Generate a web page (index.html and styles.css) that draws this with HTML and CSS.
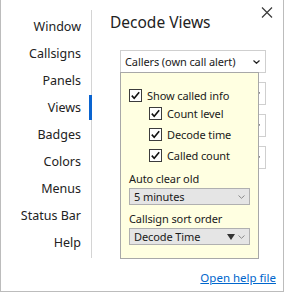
FILE: index.html
```html
<html lang="en">
<head>
    <meta charset="UTF-8">
    <title>Settings</title>
    <link rel="stylesheet" href="styles.css">
</head>
<body>
    <div class="window">
        <div class="nav">
            <div class="nav-item">Window</div>
            <div class="nav-item">Callsigns</div>
            <div class="nav-item">Panels</div>
            <div class="nav-item active">Views</div>
            <div class="nav-item">Badges</div>
            <div class="nav-item">Colors</div>
            <div class="nav-item">Menus</div>
            <div class="nav-item">Status Bar</div>
            <div class="nav-item">Help</div>
        </div>
        <div class="main">
            <div class="header">
                <div class="title">Decode Views</div>
                <div class="close">
                    <svg width="12" height="11" viewBox="0 0 12 11">
                        <path d="M1 0.5 L11 10.5 M11 0.5 L1 10.5" stroke="#3a3a3a" stroke-width="1.2" fill="none"/>
                    </svg>
                </div>
            </div>
            <div class="combos">
                <div class="combo-wrap">
                    <div class="combo">
                        <span>Callers (own call alert)</span>
                        <svg class="chev" width="7" height="4" viewBox="0 0 7 4"><path d="M0.5 0.5 L3.5 3.3 L6.5 0.5" stroke="#222" stroke-width="1.2" fill="none"/></svg>
                    </div>
                    <div class="popup">
                        <div class="check-row">
                            <svg class="box" width="13" height="13" viewBox="0 0 13 13"><rect x="0.5" y="0.5" width="12" height="12" fill="#fff" stroke="#3c3c3c"/><path d="M2.8 6.6 L5.2 9.2 L10.2 3.2" stroke="#111" stroke-width="1.6" fill="none"/></svg>
                            Show called info
                        </div>
                        <div class="sub">
                            <div class="check-row">
                                <svg class="box" width="13" height="13" viewBox="0 0 13 13"><rect x="0.5" y="0.5" width="12" height="12" fill="#fff" stroke="#3c3c3c"/><path d="M2.8 6.6 L5.2 9.2 L10.2 3.2" stroke="#111" stroke-width="1.6" fill="none"/></svg>
                                Count level
                            </div>
                            <div class="check-row">
                                <svg class="box" width="13" height="13" viewBox="0 0 13 13"><rect x="0.5" y="0.5" width="12" height="12" fill="#fff" stroke="#3c3c3c"/><path d="M2.8 6.6 L5.2 9.2 L10.2 3.2" stroke="#111" stroke-width="1.6" fill="none"/></svg>
                                Decode time
                            </div>
                            <div class="check-row">
                                <svg class="box" width="13" height="13" viewBox="0 0 13 13"><rect x="0.5" y="0.5" width="12" height="12" fill="#fff" stroke="#3c3c3c"/><path d="M2.8 6.6 L5.2 9.2 L10.2 3.2" stroke="#111" stroke-width="1.6" fill="none"/></svg>
                                Called count
                            </div>
                        </div>
                        <div class="label">Auto clear old</div>
                        <div class="select">
                            <span>5 minutes</span>
                            <svg class="chev-sm" width="7" height="4" viewBox="0 0 7 4"><path d="M0.5 0.5 L3.5 3.3 L6.5 0.5" stroke="#8a8a8a" stroke-width="1" fill="none"/></svg>
                        </div>
                        <div class="label">Callsign sort order</div>
                        <div class="select">
                            <span>Decode Time</span>
                            <span class="right">
                                <svg width="8" height="6" viewBox="0 0 8 6"><path d="M0 0 L8 0 L4 6 Z" fill="#333"/></svg>
                                <svg class="chev-sm" width="7" height="4" viewBox="0 0 7 4"><path d="M0.5 0.5 L3.5 3.3 L6.5 0.5" stroke="#8a8a8a" stroke-width="1" fill="none"/></svg>
                            </span>
                        </div>
                    </div>
                </div>
                <div class="combo"><span></span><svg class="chev" width="7" height="4" viewBox="0 0 7 4"><path d="M0.5 0.5 L3.5 3.3 L6.5 0.5" stroke="#222" stroke-width="1.2" fill="none"/></svg></div>
                <div class="combo"><span></span><svg class="chev" width="7" height="4" viewBox="0 0 7 4"><path d="M0.5 0.5 L3.5 3.3 L6.5 0.5" stroke="#222" stroke-width="1.2" fill="none"/></svg></div>
                <div class="combo"><span></span><svg class="chev" width="7" height="4" viewBox="0 0 7 4"><path d="M0.5 0.5 L3.5 3.3 L6.5 0.5" stroke="#222" stroke-width="1.2" fill="none"/></svg></div>
            </div>
            <div class="footer">
                <a href="#" class="help-link">Open help file</a>
            </div>
        </div>
    </div>
</body>
</html>
```

FILE: styles.css
```css
body {
    margin: 0;
    font-family: "Noto Sans", "Open Sans", sans-serif;
    color: #1a1a1a;
    background-color: #ffffff;
}

.window {
    display: flex;
    width: 282px;
    height: 291px;
    border: 1px solid #bcbcbc;
    border-top: none;
}

.nav {
    width: 90px;
    margin-top: 10px;
    height: 244px;
    padding-top: 4px;
    border-right: 1px solid #d4d4d4;
    display: flex;
    flex-direction: column;
    gap: 2px;
}

.nav-item {
    height: 25px;
    line-height: 25px;
    text-align: right;
    padding-right: 10px;
    font-size: 12.5px;
    color: #222;
}

.nav-item.active {
    margin-right: -1px;
    padding-right: 8px;
    border-right: 3px solid #0a64d0;
}

.main {
    flex: 1;
    display: flex;
    flex-direction: column;
}

.header {
    display: flex;
    justify-content: space-between;
    align-items: flex-start;
    padding-left: 18px;
}

.title {
    margin-top: 11px;
    font-size: 15.5px;
    line-height: 22px;
    color: #222;
}

.close {
    margin-top: 7px;
    margin-right: 10px;
    line-height: 0;
}

.combos {
    margin-top: 17px;
    margin-left: 28px;
    width: 146px;
    display: flex;
    flex-direction: column;
    gap: 9px;
}

.combo-wrap {
    position: relative;
}

.combo {
    height: 21px;
    border: 1px solid #cfcfcf;
    display: flex;
    justify-content: space-between;
    align-items: center;
    padding: 0 5px 0 4px;
    font-size: 11px;
    letter-spacing: -0.1px;
    background-color: #fff;
}

.chev {
    margin-top: 1px;
}

.popup {
    position: absolute;
    left: 0;
    top: 22px;
    width: 121px;
    height: 173px;
    padding: 12px 8px 0 8px;
    background-color: #ffffe1;
    border: 1px solid #a8a8a8;
    font-size: 11px;
    letter-spacing: -0.1px;
    z-index: 2;
}

.check-row {
    height: 20px;
    display: flex;
    align-items: center;
    gap: 5px;
}

.sub {
    margin-top: -2px;
    padding-left: 20px;
    display: flex;
    flex-direction: column;
    gap: 1px;
}

.label {
    margin-top: 5px;
    height: 18px;
    line-height: 18px;
}

.label + .select {
    margin-top: 0;
}

.select {
    height: 15px;
    border: 1px solid #b0b0b0;
    background-color: #e5e5e5;
    display: flex;
    justify-content: space-between;
    align-items: center;
    padding: 0 4px 0 4px;
}

.right {
    display: flex;
    align-items: center;
    gap: 3px;
}

.footer {
    margin-top: auto;
    padding: 0 7px 6px 0;
    text-align: right;
}

.help-link {
    font-size: 11.5px;
    color: #0066cc;
}
```
